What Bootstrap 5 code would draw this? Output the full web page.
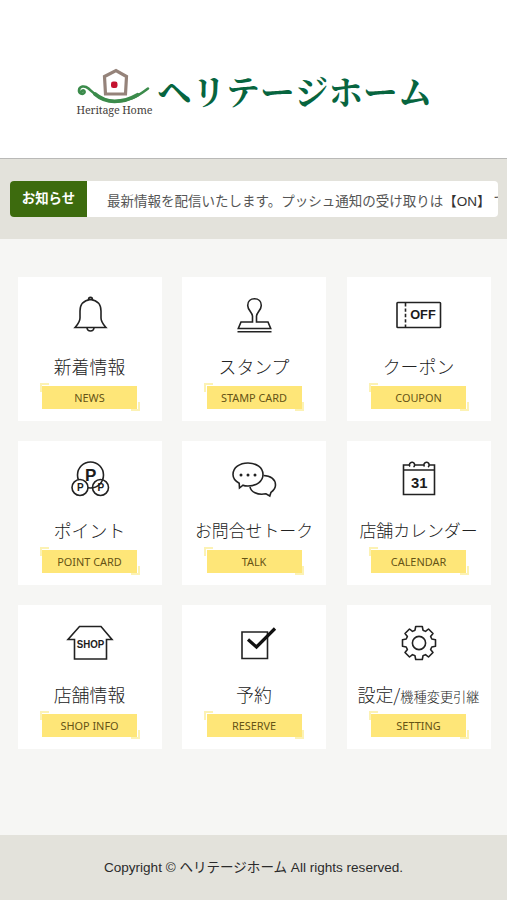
<!DOCTYPE html>
<html lang="ja">
<head>
<meta charset="utf-8">
<meta name="viewport" content="width=device-width, initial-scale=1">
<title>ヘリテージホーム</title>
<link rel="stylesheet" href="https://cdn.jsdelivr.net/npm/bootstrap@5.3.0/dist/css/bootstrap.min.css">
<style>
body{background:#f6f6f4;font-family:"Liberation Sans","Noto Sans CJK JP",sans-serif;height:900px;overflow:hidden;color:#222}
.site-head{height:159px;background:#fff;border-bottom:1px solid #b9b9b7;padding:63px 0 0 75px}
.emblem{width:80px;height:56px;flex:none}
.brand-name{font:700 34.6px/54px "Noto Serif CJK JP","Noto Sans CJK JP",serif;color:#07653f;white-space:nowrap;margin-left:2px}
.news-band{height:80px;background:#e3e2db;padding:22px 9px 0 10px}
.news-box{height:36px;border-radius:4px}
.news-label{width:77px;background:#3d6b0e;color:#fff;font:700 13.4px/33px "Noto Sans CJK JP",sans-serif;flex:none}
.news-text{font-size:13.5px;line-height:41px;color:#555;padding-left:20px}
.news-state{color:#333;margin-right:3px}
.tile-grid{display:grid;grid-template-columns:repeat(3,144px);gap:20px 20.5px;padding:37.5px 0 0 17.5px;height:596px;align-content:start}
.tile{height:144px;color:#222;padding-top:14px}
.tile svg{width:48px;height:48px;fill:none;stroke:#222;stroke-width:1.6;flex:none}
.tile svg text{fill:#1c1c1c;stroke:none;font-family:"Liberation Sans",sans-serif;font-weight:700}
.tile-name{font:300 17.9px/26px "Noto Sans CJK JP",sans-serif;height:26px;margin-top:14px;white-space:nowrap}
.tile-name.long{font-size:16.9px}
.tile-name small{font-size:13.2px;line-height:1}
.tag{width:95px;height:23px;background:#fee678;color:#655315;font:400 10.9px/23px "Noto Sans",sans-serif;margin-top:7px;position:relative;white-space:nowrap}
.tag::before,.tag::after{content:"";position:absolute;width:9px;height:9px;border:2px solid #fcf2b4}
.tag::before{left:-2.5px;top:-2.5px;border-right:0;border-bottom:0}
.tag::after{right:-2.5px;bottom:-2.5px;border-left:0;border-top:0}
.site-foot{height:65px;background:#e3e2db;font-size:13.55px;color:#2b2b2b;padding-top:1px}
</style>
</head>
<body>
<header class="site-head d-flex">
<svg class="emblem" viewBox="0 0 80 56" fill="none">
<path d="M29.500 13.500L41 7.500l10.500 6L50.500 31h-20z" stroke="#95837a" stroke-width="3.200"/>
<rect x="36" y="18.500" width="6.500" height="6.500" rx="2.300" fill="#c4122f"/>
<path d="M6.500 28.500c1.500-2.500 4-.5 2.800 1.300-1.700 2.300-5.500.7-5.300-2.500.3-4 5.500-5.300 9.500-1.800 5 4.500 12 12.300 26 12.800 13 .5 22-4 33.500-12.800" stroke="#3b8b4b" stroke-width="2.600" stroke-linecap="round"/>
<path d="M20 31c5 4.300 10.500 7.300 19.500 7.300 10 0 17-3 23-6.500" stroke="#3b8b4b" stroke-width="3.800" stroke-linecap="round"/>
<text x="1.500" y="50.500" font-family="Noto Serif,Liberation Serif,serif" font-size="10.800" fill="#45413c" textLength="76">Heritage Home</text>
</svg>
<div class="brand-name">ヘリテージホーム</div>
</header>
<section class="news-band">
<div class="news-box d-flex bg-white overflow-hidden">
<div class="news-label text-center">お知らせ</div>
<div class="news-text text-nowrap">最新情報を配信いたします。プッシュ通知の受け取りは<span class="news-state">【ON】</span>で</div>
</div>
</section>
<main class="tile-grid">
<a class="tile bg-white text-decoration-none d-flex flex-column align-items-center">
<svg viewBox="0 0 48 48"><path d="M24.500 8.500C17 9.500 14 14 14 20v7c0 4-2 6-5 9.500h31c-3-3.500-5-5.500-5-9.500v-7c0-6-3-10.500-10.500-11.500z"/><path d="M22.500 9c0-3.500 4-3.500 4 0M21 37c.5 4 6.500 4 7 0"/></svg>
<div class="tile-name">新着情報</div><div class="tag text-center">NEWS</div></a>
<a class="tile bg-white text-decoration-none d-flex flex-column align-items-center">
<svg viewBox="0 0 48 48"><path d="M22.500 31v-6c0-3-4.800-6-4.800-10.600C17.700 10.500 20.500 7.800 24.500 7.800s6.800 2.700 6.800 6.600C31.300 19 26.500 22 26.500 25v6H38l2.700 6.500H8.300L11 31zM7.500 40.800h34"/></svg>
<div class="tile-name">スタンプ</div><div class="tag text-center">STAMP CARD</div></a>
<a class="tile bg-white text-decoration-none d-flex flex-column align-items-center">
<svg viewBox="0 0 48 48"><rect x="2" y="11.500" width="43.500" height="25" rx=".7"/><path d="M10.500 12v24" stroke-dasharray="3.400 2"/><text x="15.200" y="28.300" font-size="12.500" textLength="25.500" lengthAdjust="spacingAndGlyphs">OFF</text></svg>
<div class="tile-name">クーポン</div><div class="tag text-center">COUPON</div></a>

<a class="tile bg-white text-decoration-none d-flex flex-column align-items-center">
<svg viewBox="0 0 48 48"><circle cx="24.500" cy="20" r="13"/><circle cx="34.500" cy="32.500" r="8"/><circle cx="14" cy="32.500" r="8" fill="#fff"/><text x="19" y="26" font-size="17">P</text><text x="11" y="36" font-size="10">P</text><text x="31.500" y="36" font-size="10">P</text></svg>
<div class="tile-name">ポイント</div><div class="tag text-center">POINT CARD</div></a>
<a class="tile bg-white text-decoration-none d-flex flex-column align-items-center">
<svg viewBox="0 0 48 48"><path d="M33.500 20.500c7 0 12 4 12 9.500 0 3-2 5.500-4.500 7.300l-1.200 3.700-3.800-2.200c-9 1.700-15-2-16-7"/><path d="M18 8c8.500 0 15 4.700 15 11.500S26.500 31 18 31c-2 0-4-.3-5-.8L9.500 33l-.3-4.800C5 26 3 23 3 19.500 3 12.700 9.500 8 18 8z" fill="#fff"/><g fill="#222" stroke="none"><circle cx="11" cy="20" r="1.500"/><circle cx="18" cy="20" r="1.500"/><circle cx="25" cy="20" r="1.500"/></g></svg>
<div class="tile-name long">お問合せトーク</div><div class="tag text-center">TALK</div></a>
<a class="tile bg-white text-decoration-none d-flex flex-column align-items-center">
<svg viewBox="0 0 48 48"><path d="M8.500 10h31v29.500h-31zM8.500 15h31"/><path d="M15 11.500a2.600 2.600 0 1 1 3.500.5M29.500 11.500a2.600 2.600 0 1 1 3.500.5" fill="#fff"/><text x="16" y="33" font-size="15" textLength="16.500" lengthAdjust="spacingAndGlyphs">31</text></svg>
<div class="tile-name long">店舗カレンダー</div><div class="tag text-center">CALENDAR</div></a>

<a class="tile bg-white text-decoration-none d-flex flex-column align-items-center">
<svg viewBox="0 0 48 48"><path d="M13.500 7.500H35L46 20.500h-5.500V40h-32V20.500H2z"/><text x="10.800" y="28.700" font-size="10" textLength="27.500" lengthAdjust="spacingAndGlyphs">SHOP</text></svg>
<div class="tile-name">店舗情報</div><div class="tag text-center">SHOP INFO</div></a>
<a class="tile bg-white text-decoration-none d-flex flex-column align-items-center">
<svg viewBox="0 0 48 48"><path d="M12 13h25.500v26.500H12z"/><path d="M18 20.500l8.500 7.500L45 9.500" stroke="#111" stroke-width="3.200"/></svg>
<div class="tile-name">予約</div><div class="tag text-center">RESERVE</div></a>
<a class="tile bg-white text-decoration-none d-flex flex-column align-items-center">
<svg viewBox="0 0 48 48"><g transform="translate(24 24)" stroke-linejoin="round"><circle r="6.600"/><path d="M-4-12.800-3.300-16.500H3.300L4-12.800 6.500-11.600 9.500-14 14-9.500 11.600-6.500 12.800-4 16.500-3.300V3.300L12.800 4 11.600 6.500 14 9.500 9.500 14 6.500 11.600 4 12.800 3.300 16.500H-3.300L-4 12.800-6.500 11.600-9.500 14-14 9.500-11.600 6.500-12.800 4-16.500 3.300V-3.300L-12.800-4-11.600-6.500-14-9.500-9.500-14-6.500-11.600z"/></g></svg>
<div class="tile-name">設定/<small>機種変更引継</small></div><div class="tag text-center">SETTING</div></a>
</main>
<footer class="site-foot d-flex align-items-center justify-content-center">Copyright © ヘリテージホーム All rights reserved.</footer>
<script src="https://cdn.jsdelivr.net/npm/bootstrap@5.3.0/dist/js/bootstrap.bundle.min.js"></script>
</body>
</html>
